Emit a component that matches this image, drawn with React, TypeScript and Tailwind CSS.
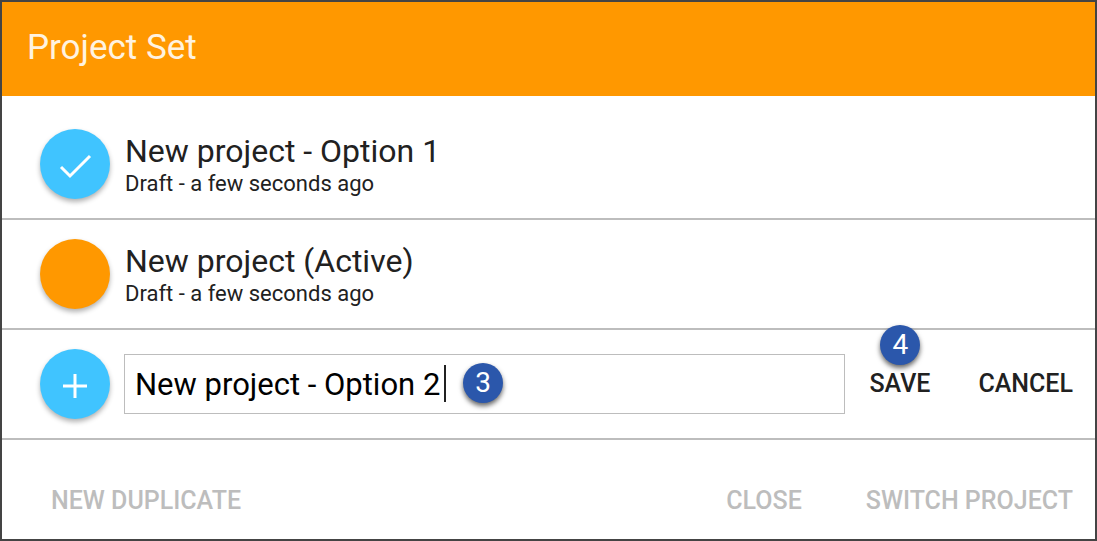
import { useState } from "react";

interface Project {
    id: number;
    title: string;
    status: string;
    selected: boolean;
}

const projects: Project[] = [
    { id: 1, title: "New project - Option 1", status: "Draft - a few seconds ago", selected: true },
    { id: 2, title: "New project (Active)", status: "Draft - a few seconds ago", selected: false },
];

export default function App() {
    const [name, setName] = useState("New project - Option 2");

    return (
        <div className="min-h-screen flex flex-col bg-white border-2 border-[#444444] font-[Roboto,sans-serif] text-[#212121]">
            {/* Header */}
            <header className="bg-[#ff9800] h-[94px] px-[25px] pb-[2px] flex items-center">
                <h1 className="text-[35px] leading-10 text-[#fff3e0]">Project Set</h1>
            </header>

            {/* Project list */}
            <ul className="pt-[14px]">
                {projects.map((project) => (
                    <li key={project.id} className="h-[110px] pl-[38px] flex items-center gap-[15px] border-b-2 border-[#bdbdbd]">
                        <ProjectRow project={project} />
                    </li>
                ))}
                <li className="h-[110px] pl-[38px] pr-[22px] flex items-center border-b-2 border-[#bdbdbd]">
                    <Circle className="bg-[#40c4ff]">
                        <path d="M35 25v24M23 37h24" />
                    </Circle>
                    <div className="relative flex-1 ml-[14px]">
                        <input
                            type="text"
                            aria-label="Project name"
                            value={name}
                            onChange={(e) => setName(e.target.value)}
                            className="block w-full h-[60px] px-[10px] border border-[#bdbdbd] text-[31px] text-black outline-none"
                        />
                        <span className="absolute left-[320px] top-[11px] w-[2px] h-[37px] bg-[#212121]" />
                        <Badge className="left-[339px] top-[9px]">3</Badge>
                    </div>
                    <div className="relative ml-6">
                        <button className="block text-[25px] leading-8 font-medium">SAVE</button>
                        <Badge className="left-[11px] -top-[43px]">4</Badge>
                    </div>
                    <button className="ml-12 text-[25px] leading-8 font-medium">CANCEL</button>
                </li>
            </ul>

            {/* Footer actions */}
            <footer className="flex-1 pt-[22px] pl-[49px] pr-[22px] flex items-center text-[25px] leading-8 font-medium text-[#bdbdbd]">
                <button>NEW DUPLICATE</button>
                <button className="ml-auto">CLOSE</button>
                <button className="ml-16">SWITCH PROJECT</button>
            </footer>
        </div>
    );
}

function ProjectRow({ project }: { project: Project }) {
    return (
        <>
            <Circle className={project.selected ? "bg-[#40c4ff]" : "bg-[#ff9800]"}>
                {project.selected && <path d="M21 38l9 9 20-20" />}
            </Circle>
            <div className="pt-1">
                <h2 className="text-[32px] leading-9">{project.title}</h2>
                <p className="text-[22px] leading-[30px]">{project.status}</p>
            </div>
        </>
    );
}

function Circle({ className, children }: { className: string; children?: React.ReactNode }) {
    return (
        <span className={`size-[70px] shrink-0 rounded-full shadow-[0_3px_5px_rgba(0,0,0,0.3)] ${className}`}>
            <svg className="size-full" viewBox="0 0 70 70" fill="none" stroke="white" strokeWidth="3" aria-hidden="true">
                {children}
            </svg>
        </span>
    );
}

function Badge({ className, children }: { className: string; children: React.ReactNode }) {
    return (
        <span className={`absolute size-10 rounded-full bg-[#2b57ab] text-white text-[28px] flex items-center justify-center shadow-[0_3px_5px_rgba(0,0,0,0.6)] ${className}`}>
            {children}
        </span>
    );
}
